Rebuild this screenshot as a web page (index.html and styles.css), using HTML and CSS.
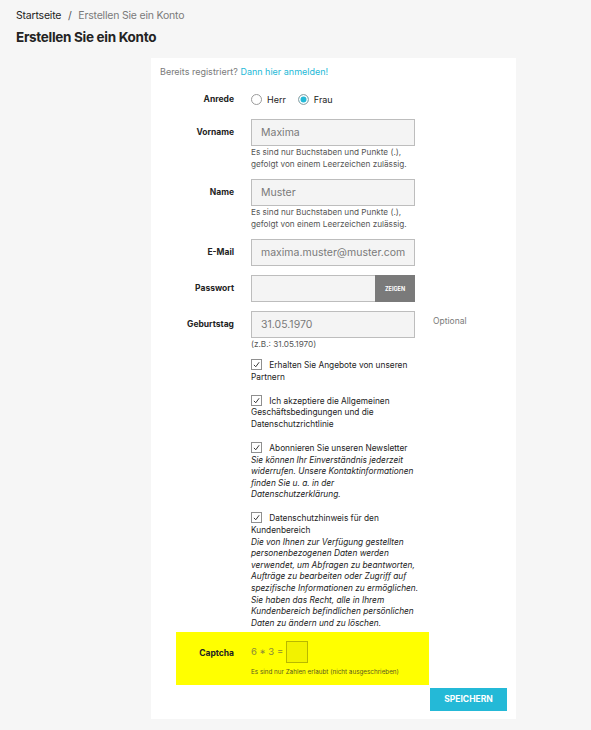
FILE: index.html
```html
<!DOCTYPE html>
<html lang="de">
<head>
    <meta charset="UTF-8">
    <meta name="viewport" content="width=device-width, initial-scale=1.0">
    <title>Erstellen Sie ein Konto</title>
    <link rel="stylesheet" href="styles.css">
</head>
<body>
    <div class="page">
        <!-- Breadcrumb -->
        <nav class="breadcrumb">
            <a href="#">Startseite</a>
            <span class="sep">/</span>
            <span class="current">Erstellen Sie ein Konto</span>
        </nav>
        <h1>Erstellen Sie ein Konto</h1>

        <section class="card">
            <p class="login-hint">Bereits registriert? <a href="#">Dann hier anmelden!</a></p>

            <form id="register-form">
                <div class="row row-radio">
                    <label class="label">Anrede</label>
                    <div class="field radios">
                        <label class="radio"><span class="dot"></span>Herr</label>
                        <label class="radio"><span class="dot checked"></span>Frau</label>
                    </div>
                </div>

                <div class="row">
                    <label class="label" for="firstname">Vorname</label>
                    <div class="field">
                        <input type="text" id="firstname" class="form-control" value="Maxima">
                        <p class="help">Es sind nur Buchstaben und Punkte (.), gefolgt von einem Leerzeichen zulässig.</p>
                    </div>
                </div>

                <div class="row">
                    <label class="label" for="lastname">Name</label>
                    <div class="field">
                        <input type="text" id="lastname" class="form-control" value="Muster">
                        <p class="help">Es sind nur Buchstaben und Punkte (.), gefolgt von einem Leerzeichen zulässig.</p>
                    </div>
                </div>

                <div class="row">
                    <label class="label" for="email">E-Mail</label>
                    <div class="field">
                        <input type="text" id="email" class="form-control" value="maxima.muster@muster.com">
                    </div>
                </div>

                <div class="row">
                    <label class="label" for="password">Passwort</label>
                    <div class="field password">
                        <input type="password" id="password" class="form-control">
                        <button type="button" class="show-btn">ZEIGEN</button>
                    </div>
                </div>

                <div class="row">
                    <label class="label" for="birthday">Geburtstag</label>
                    <div class="field">
                        <input type="text" id="birthday" class="form-control" value="31.05.1970">
                        <p class="help">(z.B.: 31.05.1970)</p>
                    </div>
                    <span class="optional">Optional</span>
                </div>

                <div class="checks">
                    <label class="check">
                        <span class="box"><svg viewBox="0 0 12 12"><path d="M2.5 6.5 L5 9 L9.5 3" /></svg></span>
                        Erhalten Sie Angebote von unseren Partnern
                    </label>
                    <label class="check">
                        <span class="box"><svg viewBox="0 0 12 12"><path d="M2.5 6.5 L5 9 L9.5 3" /></svg></span>
                        Ich akzeptiere die Allgemeinen Geschäftsbedingungen und die Datenschutzrichtlinie
                    </label>
                    <label class="check">
                        <span class="box"><svg viewBox="0 0 12 12"><path d="M2.5 6.5 L5 9 L9.5 3" /></svg></span>
                        Abonnieren Sie unseren Newsletter<br>
                        <em>Sie können Ihr Einverständnis jederzeit widerrufen. Unsere Kontaktinformationen finden Sie u. a. in der Datenschutzerklärung.</em>
                    </label>
                    <label class="check">
                        <span class="box"><svg viewBox="0 0 12 12"><path d="M2.5 6.5 L5 9 L9.5 3" /></svg></span>
                        Datenschutzhinweis für den Kundenbereich<br>
                        <em>Die von Ihnen zur Verfügung gestellten personenbezogenen Daten werden verwendet, um Abfragen zu beantworten, Aufträge zu bearbeiten oder Zugriff auf spezifische Informationen zu ermöglichen. Sie haben das Recht, alle in Ihrem Kundenbereich befindlichen persönlichen Daten zu ändern und zu löschen.</em>
                    </label>
                </div>

                <!-- Captcha -->
                <div class="captcha">
                    <label class="label" for="captcha">Captcha</label>
                    <div class="field">
                        <div class="sum">6 * 3 = <input type="text" id="captcha" class="captcha-input"></div>
                        <p class="captcha-help">Es sind nur Zahlen erlaubt (nicht ausgeschrieben)</p>
                    </div>
                </div>

                <div class="actions">
                    <button type="submit" class="save-btn">SPEICHERN</button>
                </div>
            </form>
        </section>
    </div>
</body>
</html>
```

FILE: styles.css
```css
body {
    font-family: Inter, "Noto Sans", sans-serif;
    margin: 0;
    padding: 0;
    background-color: #f6f6f6;
    color: #232323;
}

.page {
    padding: 9px 16px 11px;
}

.breadcrumb {
    font-size: 10.5px;
    line-height: 14px;
    letter-spacing: -0.2px;
}

.breadcrumb a {
    color: #232323;
    text-decoration: none;
}

.breadcrumb .sep {
    color: #555;
    margin: 0 4px;
}

.breadcrumb .current {
    color: #7a7a7a;
}

h1 {
    margin: 5px 0 0;
    font-size: 13.5px;
    line-height: 18px;
    font-weight: 700;
    letter-spacing: -0.3px;
}

.card {
    width: 347px;
    margin: 12px 0 0 135px;
    background-color: #fff;
    padding: 8px 9px 8px;
}

.login-hint {
    margin: 0 0 15px;
    font-size: 9px;
    line-height: 12px;
    color: #7a7a7a;
}

.login-hint a {
    color: #24b9d7;
    text-decoration: none;
}

.row {
    display: grid;
    grid-template-columns: 74px 164px auto;
    column-gap: 17px;
    margin-bottom: 9px;
}

.label {
    text-align: right;
    font-size: 8.5px;
    font-weight: 700;
    color: #232323;
    padding-top: 7px;
    line-height: 12px;
}

.row-radio {
    margin-bottom: 14px;
}

.row-radio .label {
    padding-top: 0;
}

.radios {
    display: flex;
    gap: 12px;
    align-items: center;
}

.radio {
    display: flex;
    align-items: center;
    font-size: 9px;
    color: #232323;
}

.dot {
    width: 9px;
    height: 9px;
    border: 1px solid #9b9b9b;
    border-radius: 50%;
    margin-right: 5px;
    box-sizing: content-box;
    background: #fff;
}

.dot.checked {
    background: #24b9d7;
    box-shadow: inset 0 0 0 1.5px #fff;
    border-color: #aaa;
}

.form-control {
    display: block;
    width: 164px;
    height: 27px;
    box-sizing: border-box;
    border: 1px solid #bdbdbd;
    background-color: #f4f4f4;
    padding: 0 9px;
    font-family: inherit;
    font-size: 10.5px;
    color: #7a7a7a;
    outline: none;
}

.help {
    margin: 0;
    font-size: 8.2px;
    line-height: 12px;
    color: #555;
}

.password {
    display: flex;
}

.password .form-control {
    width: 124px;
    border-right: none;
}

.show-btn {
    width: 40px;
    height: 27px;
    border: none;
    background-color: #7a7a7a;
    color: #fff;
    font-family: inherit;
    font-size: 5.5px;
    font-weight: 700;
    padding: 0;
}

.optional {
    font-size: 8.5px;
    color: #7a7a7a;
    padding-top: 5px;
    margin-left: 1px;
}

.checks {
    margin-left: 91px;
    width: 170px;
}

.check {
    display: block;
    font-size: 8.3px;
    line-height: 11.6px;
    color: #232323;
    margin-bottom: 11.5px;
}

.check em {
    color: #232323;
}

.box {
    display: inline-block;
    width: 9px;
    height: 9px;
    border: 1px solid #8f8f8f;
    vertical-align: -2px;
    margin-right: 5px;
    background: #fff;
}

.box svg {
    display: block;
    width: 9px;
    height: 9px;
}

.box path {
    fill: none;
    stroke: #333;
    stroke-width: 1.3;
}

.captcha {
    display: grid;
    grid-template-columns: 58px auto;
    column-gap: 17px;
    width: 253px;
    margin: -9px 0 0 16px;
    background-color: #ffff00;
    padding: 9px 0 8px;
}

.captcha .label {
    padding-top: 6px;
}

.sum {
    display: flex;
    align-items: center;
    gap: 3px;
    font-size: 9.5px;
    color: #8a8a3a;
}

.captcha-input {
    width: 22px;
    height: 22px;
    box-sizing: border-box;
    border: 1px solid #b8b800;
    background-color: #f2f200;
    outline: none;
}

.captcha-help {
    margin: 5px 0 0;
    font-size: 6.3px;
    line-height: 9px;
    color: #5a5a20;
}

.actions {
    display: flex;
    justify-content: flex-end;
    margin-top: 3px;
}

.save-btn {
    width: 77px;
    height: 23px;
    border: none;
    background-color: #24b9d7;
    color: #fff;
    font-family: inherit;
    font-size: 8.5px;
    font-weight: 700;
    padding: 0;
}
```
